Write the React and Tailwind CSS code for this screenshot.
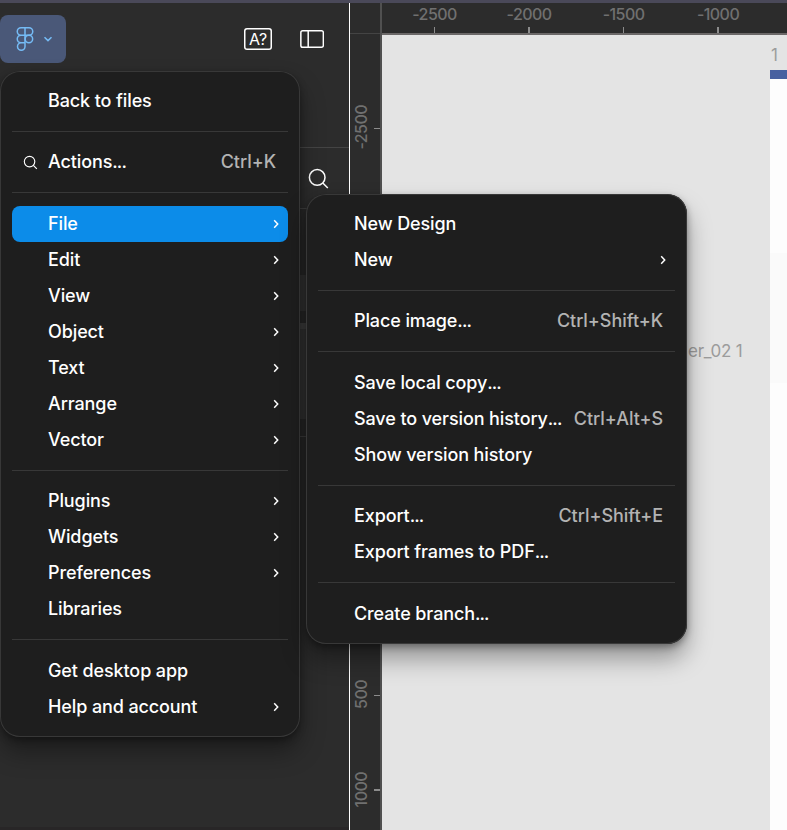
import React from 'react';

const mainMenu = [
    [{ label: 'Back to files' }],
    [{ label: 'Actions', dots: true, shortcut: 'Ctrl+K', search: true }],
    [
        { label: 'File', submenu: true, active: true },
        { label: 'Edit', submenu: true },
        { label: 'View', submenu: true },
        { label: 'Object', submenu: true },
        { label: 'Text', submenu: true },
        { label: 'Arrange', submenu: true },
        { label: 'Vector', submenu: true },
    ],
    [
        { label: 'Plugins', submenu: true },
        { label: 'Widgets', submenu: true },
        { label: 'Preferences', submenu: true },
        { label: 'Libraries' },
    ],
    [
        { label: 'Get desktop app' },
        { label: 'Help and account', submenu: true },
    ],
];

const fileMenu = [
    [{ label: 'New Design' }, { label: 'New', submenu: true }],
    [{ label: 'Place image', dots: true, shortcut: 'Ctrl+Shift+K' }],
    [
        { label: 'Save local copy', dots: true },
        { label: 'Save to version history', dots: true, shortcut: 'Ctrl+Alt+S' },
        { label: 'Show version history' },
    ],
    [
        { label: 'Export', dots: true, shortcut: 'Ctrl+Shift+E' },
        { label: 'Export frames to PDF', dots: true },
    ],
    [{ label: 'Create branch', dots: true }],
];

const columns = ['-2500', '-2000', '-1500', '-1000'];
const rows = ['-2500', '-2000', '-1500', '-1000', '-500', '0', '500', '1000'];

const FigmaLogo = () => (
    <svg className="w-[18px] h-[26px]" viewBox="0 0 18 26" fill="none" stroke="#75bbf5" strokeWidth="1.5">
        <path d="M9 1.75H5a3.75 3.75 0 0 0 0 7.5h4zM9 1.75h4a3.75 3.75 0 0 1 0 7.5H9M9 9.25H5a3.75 3.75 0 0 0 0 7.5h4zM9 16.75H5a3.75 3.75 0 1 0 4 3.75z" />
        <circle cx="12.9" cy="13" r="3.75" />
    </svg>
);

const ChevronRight = () => (
    <svg className="w-[6px] h-[10px] mr-[9px]" viewBox="0 0 6 10" fill="none" stroke="currentColor" strokeWidth="1.5">
        <path d="M1.2 1.3 4.7 5 1.2 8.7" />
    </svg>
);

const MenuItem = ({ item }) => (
    <div className={`flex items-center h-9 rounded-lg ${item.active ? 'bg-[#0c8ce9]' : ''}`}>
        <div className="w-9 pl-px shrink-0 flex justify-center">
            {item.search && (
                <svg className="w-[15px] h-[15px]" viewBox="0 0 16 16" fill="none" stroke="currentColor" strokeWidth="1.2">
                    <circle cx="7" cy="7" r="5.6" />
                    <path d="m11 11 3.8 3.8" />
                </svg>
            )}
        </div>
        <span className="flex-1 whitespace-nowrap">
            {item.label}
            {item.dots && <span className="tracking-[-0.9px]">...</span>}
        </span>
        {item.shortcut && <span className="mr-3 tracking-[-0.03px] text-[#b3b3b3]">{item.shortcut}</span>}
        {item.submenu && <ChevronRight />}
    </div>
);

const Menu = ({ groups, className }) => (
    <div
        className={`absolute bg-[#1e1e1e] px-3 pt-[11.8px] pb-[12.2px] rounded-[20px] text-lg leading-6 font-[450] tracking-[-0.11px] text-white shadow-[0_15px_24px_rgba(0,0,0,0.35),0_3px_7.5px_rgba(0,0,0,0.35),inset_0_0_0_1px_#383838] ${className}`}
    >
        {groups.map((group, i) => (
            <div key={i}>
                {i > 0 && (
                    <div className="h-[25.5px] pt-3">
                        <div className="h-px bg-[#383838]" />
                    </div>
                )}
                {group.map((item) => (
                    <MenuItem key={item.label} item={item} />
                ))}
            </div>
        ))}
    </div>
);

const Sidebar = () => (
    <div className="w-[350px] shrink-0 flex flex-col bg-[#2c2c2c] border-r border-white">
        <div className="h-36 shrink-0 flex items-start justify-between pt-3 pr-[25px]">
            <div className="flex items-center gap-[9px] w-[66px] h-12 pl-[15.5px] rounded-lg bg-[#4a5878]">
                <FigmaLogo />
                <svg className="w-2.5 h-2" viewBox="0 0 10 8" fill="none" stroke="#75bbf5" strokeWidth="1.5">
                    <path d="M1.5 2.2 5 5.6 8.5 2.2" />
                </svg>
            </div>
            <div className="flex items-center gap-7 h-12 text-white">
                <div className="flex items-center justify-center w-7 h-[22px] rounded-[3px] shadow-[inset_0_0_0_1.5px_#fff] text-base leading-none">
                    A?
                </div>
                <svg className="w-6 h-5" viewBox="0 0 24 20" fill="none" stroke="currentColor" strokeWidth="1.5">
                    <rect x="0.85" y="1.75" width="22.5" height="16.5" rx="1.8" />
                    <path d="M8.2 1.5v17" />
                </svg>
            </div>
        </div>
        <div className="h-[61px] shrink-0 flex items-center justify-end pr-5 border-t border-[#444] text-white">
            <svg className="w-[21px] h-[21px]" viewBox="0 0 21 21" fill="none" stroke="currentColor" strokeWidth="1.5">
                <circle cx="9.2" cy="9.4" r="7.8" />
                <path d="m14.8 15 5 5" />
            </svg>
        </div>
        <div className="h-[228px] shrink-0 pt-[66px] border-t border-[#444]">
            <div className="h-9 bg-[#383838]" />
            <div className="h-1.5 mt-3 bg-[#444]" />
            <div className="h-[90px] bg-[#383838]" />
        </div>
        <div className="flex-1 border-t border-[#444]" />
        <div className="h-[3px] bg-[#282627]" />
    </div>
);

const App = () => {
    return (
        <div className="relative flex flex-col w-[787px] h-[830px] overflow-hidden bg-[#2c2c2c] font-['Inter',sans-serif]">
            <div className="h-[3px] shrink-0 bg-[#4a4959]" />
            <div className="flex flex-1 min-h-0">
                <Sidebar />
                <div className="w-8 shrink-0 flex flex-col border-r-2 border-[#505050] text-base font-[450] tracking-[-0.55px] text-[#707070]">
                    <div className="h-[31px] shrink-0 border-b border-[#444]" />
                    <div className="pt-[47px]">
                        {rows.map((n) => (
                            <div key={n} className="flex items-center justify-between h-[94.5px] pl-px">
                                <span className="[writing-mode:vertical-rl] rotate-180 leading-5 pt-px">{n}</span>
                                <div className="w-1.5 h-[1.5px] bg-[#8c8c8c]" />
                            </div>
                        ))}
                    </div>
                </div>
                <div className="flex-1 min-w-0 flex flex-col">
                    <div className="h-8 shrink-0 flex pl-[5.3px] border-b-2 border-[#6b6868] text-base font-[450] tracking-[-0.55px] text-[#707070]">
                        {columns.map((n) => (
                            <div key={n} className="w-[94.5px] shrink-0 flex flex-col items-center justify-between">
                                <span className="leading-[23px]">{n}</span>
                                <div className="w-[1.5px] h-1.5 bg-[#8c8c8c]" />
                            </div>
                        ))}
                    </div>
                    <div className="relative flex-1 bg-[#e4e4e4] text-[17px] leading-5 tracking-[-0.25px] text-[#9c9c9c]">
                        <span className="absolute left-[306px] top-[306px] whitespace-nowrap">er_02 1</span>
                        <span className="absolute left-[389px] top-[10px]">1</span>
                        <div className="absolute left-[388px] right-0 top-[35px] bottom-0 bg-[#fdfdfd]">
                            <div className="h-[9px] bg-[#4760a0]" />
                            <div className="h-[174px]" />
                            <div className="h-[130px] bg-[#fafafa]" />
                        </div>
                    </div>
                </div>
            </div>
            <Menu groups={mainMenu} className="left-0 top-[71px] w-[300px]" />
            <Menu groups={fileMenu} className="left-[306px] top-[194px] w-[381px]" />
        </div>
    );
};

export default App;
